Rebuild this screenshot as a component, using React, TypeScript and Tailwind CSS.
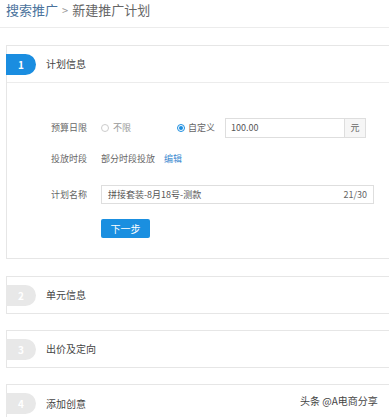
import React from "react";

function StepHeader({ n, title, active }: { n: number; title: string; active?: boolean }) {
  return (
    <div className="flex items-center h-full">
      <div
        className={
          "-ml-px w-[30px] h-[21px] rounded-r-full flex items-center justify-center text-[10px] font-bold text-white " +
          (active ? "bg-[#1a8de0]" : "bg-[#e8e8e8]")
        }
      >
        {n}
      </div>
      <div className="ml-[10px] text-[10px] text-[#444] leading-none">{title}</div>
    </div>
  );
}

export default function App() {
  return (
    <div
      className="relative w-[389px] h-[417px] overflow-hidden bg-white"
      style={{ fontFamily: '"Noto Sans CJK SC", "Noto Sans", sans-serif' }}
    >
      {/* breadcrumb */}
      <div className="h-[28px] border-b border-[#ececec] pl-[6px] flex items-start">
        <div className="text-[13px] leading-[20px] pt-0">
          <span className="text-[#4a729c]">搜索推广</span>
          <span className="text-[#999] text-[11px] mx-[4px]">&gt;</span>
          <span className="text-[#666]">新建推广计划</span>
        </div>
      </div>

      {/* panel 1 */}
      <div className="mt-[17px] ml-[6px] h-[214px] border-t border-l border-b border-[#e6e6e6] flex flex-col">
        <div className="h-[37px] border-b border-[#ececec] shrink-0">
          <StepHeader n={1} title="计划信息" active />
        </div>
        <div className="pl-[44px] pt-[35px] text-[9px] text-[#666]">
          {/* row 1 */}
          <div className="flex items-center h-[20px]">
            <div className="w-[50px]">预算日限</div>
            <div className="w-[76px] flex items-center">
              <span className="w-[8px] h-[8px] rounded-full border border-[#ccc] bg-white" />
              <span className="ml-[4px] text-[#999]">不限</span>
            </div>
            <div className="flex items-center">
              <span className="w-[8px] h-[8px] rounded-full border border-[#1a8de0] flex items-center justify-center">
                <span className="w-[4px] h-[4px] rounded-full bg-[#1a8de0]" />
              </span>
              <span className="ml-[3px]">自定义</span>
            </div>
            <div className="ml-[10px] w-[141px] h-[20px] border border-[#dedede] flex items-stretch">
              <div className="flex-1 flex items-center pl-[5px] text-[#555]">100.00</div>
              <div className="w-[21px] border-l border-[#dedede] bg-[#f6f6f6] flex items-center justify-center text-[#666]">元</div>
            </div>
          </div>
          {/* row 2 */}
          <div className="flex items-center h-[20px] mt-[11px]">
            <div className="w-[50px]">投放时段</div>
            <div>部分时段投放</div>
            <div className="ml-[9px] text-[#3b8ad0]">编辑</div>
          </div>
          {/* row 3 */}
          <div className="flex items-center h-[19px] mt-[16px]">
            <div className="w-[50px]">计划名称</div>
            <div className="w-[273px] h-[19px] border border-[#dedede] flex items-center justify-between px-[6px] text-[#555]">
              <span>拼接套装-8月18号-测款</span>
              <span className="text-[#666]">21/30</span>
            </div>
          </div>
          {/* button */}
          <div className="flex mt-[15px]">
            <div className="w-[50px]" />
            <div className="w-[49px] h-[19px] bg-[#1a8fe0] rounded-[2px] text-white text-[10px] flex items-center justify-center">
              下一步
            </div>
          </div>
        </div>
      </div>

      {/* panel 2 */}
      <div className="mt-[17px] ml-[6px] h-[38px] border-t border-l border-b border-[#e6e6e6]">
        <StepHeader n={2} title="单元信息" />
      </div>
      {/* panel 3 */}
      <div className="mt-[16px] ml-[6px] h-[38px] border-t border-l border-b border-[#e6e6e6]">
        <StepHeader n={3} title="出价及定向" />
      </div>
      {/* panel 4 */}
      <div className="mt-[16px] ml-[6px] h-[38px] border-t border-l border-[#e6e6e6]">
        <StepHeader n={4} title="添加创意" />
      </div>

      <div className="absolute left-[300px] top-[396px] text-[10px] text-[#444] leading-none">
        头条 @A电商分享
      </div>
    </div>
  );
}
